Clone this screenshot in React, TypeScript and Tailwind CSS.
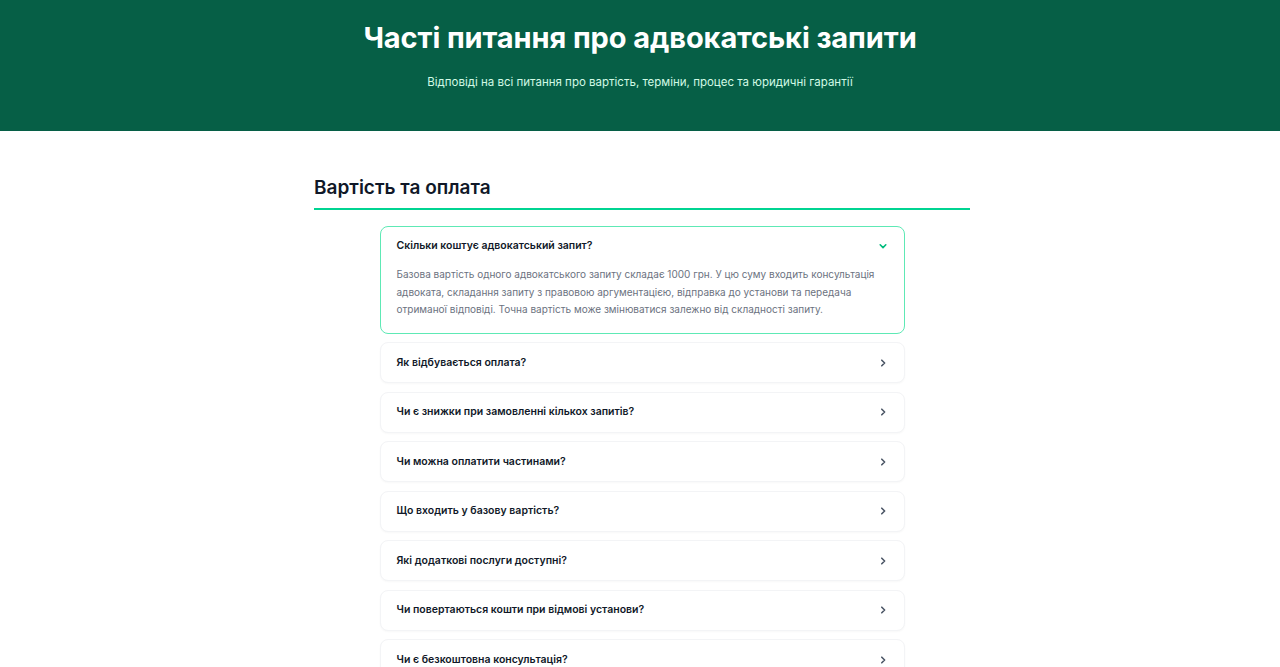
import React from "react";

const items = [
  "Як відбувається оплата?",
  "Чи є знижки при замовленні кількох запитів?",
  "Чи можна оплатити частинами?",
  "Що входить у базову вартість?",
  "Які додаткові послуги доступні?",
  "Чи повертаються кошти при відмові установи?",
  "Чи є безкоштовна консультація?",
];

function ChevronRight() {
  return (
    <svg width="8" height="8" viewBox="0 0 10 10" fill="none" className="text-gray-600 mr-[1px]">
      <path d="M3.5 1.5L7 5L3.5 8.5" stroke="currentColor" strokeWidth="2" strokeLinecap="round" strokeLinejoin="round" />
    </svg>
  );
}

function ChevronDown() {
  return (
    <svg width="8" height="8" viewBox="0 0 10 10" fill="none" className="text-emerald-500 mr-[1px]">
      <path d="M1.5 3.5L5 7L8.5 3.5" stroke="currentColor" strokeWidth="2" strokeLinecap="round" strokeLinejoin="round" />
    </svg>
  );
}

export default function App() {
  return (
    <div className="min-h-screen bg-white" style={{ fontFamily: "Inter, 'Noto Sans', sans-serif" }}>
      <header className="bg-[#065f46] pt-[20px] pb-[39px] text-center">
        <h1 className="text-[29px] leading-[36px] font-bold text-white tracking-[-0.1px]">
          Часті питання про адвокатські запити
        </h1>
        <p className="mt-4 text-[11.5px] leading-[20px] text-[#d1fae5]">
          Відповіді на всі питання про вартість, терміни, процес та юридичні гарантії
        </p>
      </header>

      <main className="mx-auto w-[656px] translate-x-[2px] pt-[43px] pb-10">
        <h2 className="text-[19px] leading-[28px] font-semibold text-gray-900 pb-[6px] border-b-2 border-emerald-400">
          Вартість та оплата
        </h2>

        <div className="mx-auto w-[525px] mt-4 flex flex-col gap-[8.5px]">
          <div className="rounded-lg border border-emerald-300 bg-white px-4 pt-[8px] pb-[14px]">
            <div className="flex items-center justify-between h-[20px] mt-[1px]">
              <span className="text-[10.5px] leading-[20px] font-semibold text-gray-900">
                Скільки коштує адвокатський запит?
              </span>
              <ChevronDown />
            </div>
            <p className="mt-[10px] text-[10px] leading-[17.5px] text-[#6b7280] whitespace-nowrap">
              Базова вартість одного адвокатського запиту складає 1000 грн. У цю суму входить консультація
              <br />
              адвоката, складання запиту з правовою аргументацією, відправка до установи та передача
              <br />
              отриманої відповіді. Точна вартість може змінюватися залежно від складності запиту.
            </p>
          </div>

          {items.map((q, i) => (
            <div
              key={i}
              className="rounded-lg border border-gray-100 bg-white px-4 h-[41px] flex items-center justify-between shadow-[0_1px_2px_rgba(0,0,0,0.03)]"
            >
              <span className="text-[10.5px] leading-[20px] font-semibold text-gray-900">{q}</span>
              <ChevronRight />
            </div>
          ))}
        </div>
      </main>
    </div>
  );
}
